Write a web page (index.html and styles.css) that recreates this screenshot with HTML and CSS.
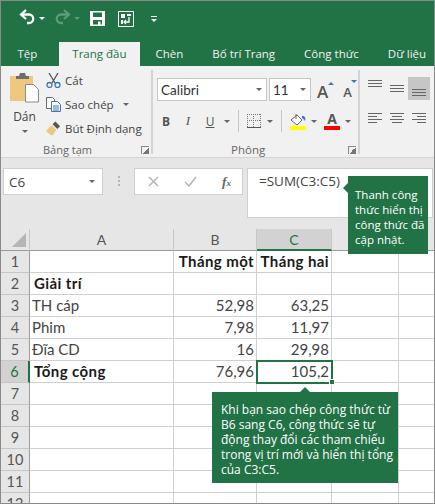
FILE: index.html
```html
<!DOCTYPE html>
<html lang="vi">
<head>
    <meta charset="UTF-8" />
    <title>Excel</title>
    <link rel="stylesheet" href="styles.css">
</head>
<body>
<div class="cua-so">
    <div class="thanh-nhanh">
        <svg class="qa qa-undo" width="16" height="16" viewBox="0 0 16 16"><path d="M7 1 2 5.500l5 4.500M2.500 5.500H10a4.200 4.200 0 0 1 0 8.500H8" fill="none" stroke="#fff" stroke-width="2.300"/></svg>
        <span class="caret caret-trang"></span>
        <svg class="qa qa-redo" width="16" height="16" viewBox="0 0 16 16"><path d="M9 1l5 4.500-5 4.500M13.500 5.500H6a4.200 4.200 0 0 0 0 8.500h2" fill="none" stroke="#5f9a7a" stroke-width="2.300"/></svg>
        <span class="caret caret-mo"></span>
        <svg class="qa qa-save" width="15" height="15" viewBox="0 0 15 15"><path d="M0 0h15v15H0z" fill="#fff"/><path d="M3 1.500h9v4.500H3zM3 9h9v4.500h-1.500V10.500H8v3H3z" fill="#217346"/></svg>
        <svg class="qa qa-touch" width="16" height="16" viewBox="0 0 16 16"><path d="M.5.5h15v15H.5z" fill="#217346" stroke="#fff"/><path d="M3 3h4v4H3zM9 3h4v2H9zM3 9h2v4H3z" fill="#fff"/><path d="M11 6v5H6m2-2-2 2 2 2" fill="none" stroke="#fff" stroke-width="1.300"/></svg>
        <span class="tuy-chinh"></span>
    </div>

    <div class="thanh-tab">
        <span class="tab">Tệp</span>
        <span class="tab tab-chon">Trang đầu</span>
        <span class="tab">Chèn</span>
        <span class="tab">Bố trí Trang</span>
        <span class="tab">Công thức</span>
        <span class="tab">Dữ liệu</span>
    </div>

    <div class="ribbon">
        <div class="nhom nhom-bang-tam">
            <div class="nhom-than">
                <div class="nut-dan">
                    <svg width="29" height="30" viewBox="0 0 29 30">
                        <path d="M0 3h23v25H0z" fill="#edc87e"/>
                        <path d="M6 3h3l1-3h5l1 3h3v3H6z" fill="#6d6d6d"/>
                        <path d="M15.500 11.500h8l5 5v12.500h-13z" fill="#fff" stroke="#8a8a8a"/>
                    </svg>
                    <span>Dán</span>
                    <span class="caret"></span>
                </div>
                <div class="lenh-nho">
                    <div class="lenh">
                        <svg width="15" height="15" viewBox="0 0 15 15"><path d="M3 0l6 10M12 0 6 10" stroke="#555" stroke-width="1.300" fill="none"/><circle cx="3.500" cy="12" r="2.500" fill="none" stroke="#3a78b5" stroke-width="1.300"/><circle cx="11.500" cy="12" r="2.500" fill="none" stroke="#3a78b5" stroke-width="1.300"/></svg>
                        <span>Cắt</span>
                    </div>
                    <div class="lenh">
                        <svg width="15" height="15" viewBox="0 0 15 15"><path d="M.5.500h6l2 2v9h-8z" fill="#fff" stroke="#666"/><path d="M5.500 4.500h6l3 3v7h-9z" fill="#fff" stroke="#3a78b5"/><path d="M7 9h6M7 11h6M7 13h6" stroke="#3a78b5"/></svg>
                        <span>Sao chép</span>
                        <span class="caret caret-sao"></span>
                    </div>
                    <div class="lenh">
                        <svg width="15" height="15" viewBox="0 0 16 15"><path d="M0 10l6-6 5 5-4 6-3-1z" fill="#edc87e"/><path d="M7 3l3-3 5 5-3 3z" fill="#555"/></svg>
                        <span>Bút Định dạng</span>
                    </div>
                </div>
            </div>
            <div class="nhom-ten nhom-ten-bang">Bảng tạm<span class="mo-rong"></span></div>
        </div>

        <div class="nhom nhom-phong">
            <div class="chon-phong">
                <div class="o-chon o-font">Calibri<span class="caret"></span></div>
                <div class="o-chon o-co">11<span class="caret"></span></div>
                <span class="a-lon">A<i class="tam-giac len"></i></span>
                <span class="a-nho">A<i class="tam-giac xuong"></i></span>
            </div>
            <div class="dinh-dang">
                <b class="ky-tu">B</b>
                <i class="ky-tu ky-i">I</i>
                <u class="ky-tu">U</u>
                <span class="caret caret-u"></span>
                <span class="vach"></span>
                <svg class="icon-vien" width="14" height="14" viewBox="0 0 14 14" shape-rendering="crispEdges"><path d="M0 .5h14M0 6.500h14M.5 0v14M6.500 0v14M13.500 0v14" fill="none" stroke="#777" stroke-dasharray="1 1"/><path d="M0 13.500h14" stroke="#555"/></svg>
                <span class="caret caret-vien"></span>
                <span class="vach"></span>
                <svg class="icon-to" width="16" height="17" viewBox="0 0 16 17"><path d="M1 7l6-5 5 5-5 5z" fill="#fff" stroke="#666"/><path d="M6 1v5" stroke="#666"/><path d="M12 3c3 0 4 2 3 5-1-2-2-2-3-3z" fill="#3a78b5"/><path d="M0 13h16v4H0z" fill="#ffff00"/></svg>
                <span class="caret caret-to"></span>
                <span class="mau-chu">A</span>
                <span class="caret caret-chu"></span>
            </div>
            <div class="nhom-ten nhom-ten-phong">Phông<span class="mo-rong"></span></div>
        </div>

        <div class="nhom-canh">
            <svg class="canh canh-tren" width="14" height="8" viewBox="0 0 14 8"><path d="M0 .5h14M0 3.500h14M0 6.500h14" stroke="#666"/></svg>
            <svg class="canh" width="14" height="8" viewBox="0 0 14 8"><path d="M0 .5h14M0 3.500h14M0 6.500h14" stroke="#666"/></svg>
            <div class="canh-chon"><svg width="14" height="8" viewBox="0 0 14 8"><path d="M0 .5h14M0 3.500h14M0 6.500h14" stroke="#666"/></svg></div>
            <svg class="canh" width="14" height="10" viewBox="0 0 14 10"><path d="M0 .5h14M0 3.500h9M0 6.500h14M0 9.500h9" stroke="#666"/></svg>
            <svg class="canh" width="14" height="10" viewBox="0 0 14 10"><path d="M0 .5h14M2 3.500h10M0 6.500h14M2 9.500h10" stroke="#666"/></svg>
            <svg class="canh" width="14" height="10" viewBox="0 0 14 10"><path d="M0 .5h14M5 3.500h9M0 6.500h14M5 9.500h9" stroke="#666"/></svg>
        </div>
    </div>

    <div class="thanh-cong-thuc">
        <div class="o-ten">C6<span class="caret"></span></div>
        <span class="cham-doc"></span>
        <div class="nut-cong-thuc">
            <svg width="11" height="11" viewBox="0 0 11 11"><path d="M1 1l9 9M10 1l-9 9" stroke="#b5b5b5" stroke-width="1.500"/></svg>
            <svg width="13" height="11" viewBox="0 0 13 11"><path d="M1 6l4 4 7-9" fill="none" stroke="#b5b5b5" stroke-width="1.500"/></svg>
            <span class="fx">f<small>x</small></span>
        </div>
        <div class="o-cong-thuc">=SUM(C3:C5)</div>
    </div>

    <div class="bang">
        <div class="dau-cot goc"><span class="tam-giac-goc"></span></div>
        <div class="dau-cot">A</div>
        <div class="dau-cot">B</div>
        <div class="dau-cot cot-chon">C</div>
        <div class="dau-cot"></div>
        <div class="dau-cot"></div>

        <div class="dau-hang">1</div><div class="o"></div><div class="o dam phai">Tháng một</div><div class="o dam phai">Tháng hai</div><div class="o"></div><div class="o"></div>
        <div class="dau-hang">2</div><div class="o dam thut">Giải trí</div><div class="o"></div><div class="o"></div><div class="o"></div><div class="o"></div>
        <div class="dau-hang">3</div><div class="o">TH cáp</div><div class="o phai">52,98</div><div class="o phai">63,25</div><div class="o"></div><div class="o"></div>
        <div class="dau-hang">4</div><div class="o">Phim</div><div class="o phai">7,98</div><div class="o phai">11,97</div><div class="o"></div><div class="o"></div>
        <div class="dau-hang">5</div><div class="o">Đĩa CD</div><div class="o phai">16</div><div class="o phai">29,98</div><div class="o"></div><div class="o"></div>
        <div class="dau-hang hang-chon">6</div><div class="o dam thut">Tổng cộng</div><div class="o phai">76,96</div><div class="o phai o-chon-hien">105,2<span class="tay-nam"></span></div><div class="o"></div><div class="o"></div>
        <div class="dau-hang">7</div><div class="o"></div><div class="o"></div><div class="o"></div><div class="o"></div><div class="o"></div>
        <div class="dau-hang">8</div><div class="o"></div><div class="o"></div><div class="o"></div><div class="o"></div><div class="o"></div>
        <div class="dau-hang">9</div><div class="o"></div><div class="o"></div><div class="o"></div><div class="o"></div><div class="o"></div>
        <div class="dau-hang">10</div><div class="o"></div><div class="o"></div><div class="o"></div><div class="o"></div><div class="o"></div>
        <div class="dau-hang">11</div><div class="o"></div><div class="o"></div><div class="o"></div><div class="o"></div><div class="o"></div>
        <div class="dau-hang dau-hang-cuoi">12</div><div class="o"></div><div class="o"></div><div class="o"></div><div class="o"></div><div class="o"></div>
    </div>

    <div class="chu-thich chu-thich-tren">Thanh công thức hiển thị công thức đã cập nhật.</div>
    <div class="chu-thich chu-thich-duoi">Khi bạn sao chép công thức từ B6 sang C6, công thức sẽ tự động thay đổi các tham chiếu trong vị trí mới và hiển thị tổng của C3:C5.</div>
</div>
</body>
</html>
```

FILE: styles.css
```css
* {
    margin: 0;
    padding: 0;
    box-sizing: border-box;
}

body {
    font-family: "Open Sans", "Noto Sans", sans-serif;
    background: #ffffff;
}

.cua-so {
    position: relative;
    width: 435px;
    height: 504px;
    overflow: hidden;
    border: 1px solid #8a8a8a;
    background: #e6e6e6;
}

.caret {
    display: inline-block;
    flex: none;
    width: 0;
    height: 0;
    border-left: 3px solid transparent;
    border-right: 3px solid transparent;
    border-top: 3px solid #666;
}

/* thanh truy cap nhanh */
.thanh-nhanh {
    height: 41px;
    background: #217346;
    display: flex;
    align-items: center;
    padding: 0 0 6px 18px;
}

.qa-undo,
.qa-redo {
    margin-top: -4px;
}

.caret-trang {
    border-top-color: #fff;
    margin-left: 4px;
}

.caret-mo {
    border-top-color: #5f9a7a;
    margin-left: 3px;
}

.qa-redo {
    margin-left: 10px;
}

.qa-save {
    margin-left: 10px;
}

.qa-touch {
    margin-left: 13px;
}

.tuy-chinh {
    width: 6px;
    height: 6px;
    margin-left: 17px;
    border-top: 1px solid #fff;
    position: relative;
}

.tuy-chinh::after {
    content: "";
    position: absolute;
    top: 2px;
    left: 0;
    border-left: 3px solid transparent;
    border-right: 3px solid transparent;
    border-top: 3px solid #fff;
}

/* tab */
.thanh-tab {
    height: 24px;
    background: #217346;
    display: flex;
    padding-left: 2px;
    font-size: 11.500px;
    color: #f1f1f1;
}

.tab {
    padding: 0 14.500px;
    line-height: 24px;
    white-space: nowrap;
}

.tab-chon {
    background: #f1f1f1;
    color: #217346;
    margin: 0 1px 0 7px;
    padding: 0 13.500px;
}

/* ribbon */
.ribbon {
    height: 92px;
    background: #f1f1f1;
    border-bottom: 1px solid #d4d4d4;
    display: flex;
    font-size: 11.500px;
    color: #444;
}

.nhom {
    position: relative;
    margin-top: 4px;
    height: 84px;
    border-right: 2px solid #d4d4d4;
}

.nhom-bang-tam {
    width: 152px;
}

.nhom-than {
    display: flex;
    padding: 3px 0 0 9px;
}

.nut-dan {
    display: flex;
    flex-direction: column;
    align-items: center;
    width: 29px;
    gap: 3px;
}

.nut-dan span:nth-child(2) {
    line-height: 20px;
    font-size: 12px;
    margin-top: 1px;
}

.lenh-nho {
    margin: -4px 0 0 7px;
    display: flex;
    flex-direction: column;
    gap: 1px;
}

.lenh {
    display: flex;
    align-items: center;
    gap: 4px;
    height: 23px;
    white-space: nowrap;
}

.caret-sao {
    margin-left: 5px;
}

.nhom-ten {
    position: absolute;
    top: 72px;
    line-height: 16px;
    color: #666;
    font-size: 11px;
}

.nhom-ten-bang {
    left: 42px;
}

.nhom-ten-phong {
    left: 78px;
    font-size: 11.500px;
}

.mo-rong {
    position: absolute;
    top: 4px;
    width: 8px;
    height: 8px;
    border-left: 1px solid #888;
    border-top: 1px solid #888;
    background: linear-gradient(135deg, transparent 50%, #777 50%);
}

.nhom-ten-bang .mo-rong {
    left: 98px;
}

.nhom-ten-phong .mo-rong {
    left: 117px;
}

.nhom-phong {
    width: 207px;
}

.chon-phong {
    display: flex;
    align-items: center;
    padding: 7px 0 0 4px;
    gap: 2px;
}

.o-chon {
    height: 23px;
    background: #fff;
    border: 1px solid #c6c6c6;
    display: flex;
    align-items: center;
    justify-content: space-between;
    padding: 0 4px 0 3px;
    font-family: "Lato", sans-serif;
    font-size: 13.500px;
    color: #333;
}

.o-font {
    width: 110px;
}

.o-co {
    width: 42px;
}

.a-lon,
.a-nho {
    position: relative;
    font-size: 17px;
    font-weight: 600;
    color: #555;
    line-height: 20px;
}

.a-lon {
    margin: 4px 0 0 4px;
}

.a-nho {
    font-size: 13px;
    margin: 5px 0 0 13px;
}

.tam-giac {
    position: absolute;
    top: 0;
    right: -6px;
    border-left: 3px solid transparent;
    border-right: 3px solid transparent;
}

.a-nho .tam-giac {
    top: -2px;
    right: -5px;
}

.len {
    border-bottom: 3px solid #3a78b5;
}

.xuong {
    border-top: 3px solid #3a78b5;
}

.dinh-dang {
    display: flex;
    align-items: center;
    height: 24px;
    margin-top: 7px;
    padding-left: 2px;
}

.ky-tu {
    font-size: 12px;
    width: 22px;
    text-align: center;
    color: #555;
}

.ky-i {
    font-family: "Liberation Serif", serif;
    font-size: 13px;
}

.caret-u {
    margin-left: 3px;
}

.caret-vien {
    margin-left: 6px;
}

.caret-to {
    margin-left: 5px;
}

.caret-chu {
    margin-left: 5px;
}

.vach {
    flex: none;
    width: 1px;
    height: 22px;
    background: #c6c6c6;
    margin: 0 8px;
}

.mau-chu {
    margin-left: 7px;
    width: 16px;
    text-align: center;
    font-size: 14px;
    font-weight: 700;
    line-height: 14px;
    color: #555;
    border-bottom: 4px solid #ff0000;
}

.nhom-canh {
    display: grid;
    grid-template-columns: repeat(3, 22px);
    grid-template-rows: 23px 22px;
    row-gap: 7px;
    margin: 11px 0 0 4px;
    justify-items: center;
    align-items: center;
    align-content: start;
}

.canh-tren {
    align-self: start;
    margin-top: 3px;
}

.canh-chon {
    width: 22px;
    height: 23px;
    background: #c6c6c6;
    display: flex;
    align-items: flex-end;
    justify-content: center;
    padding-bottom: 3px;
}

/* thanh cong thuc */
.thanh-cong-thuc {
    display: flex;
    height: 71px;
    padding-top: 10px;
    font-size: 13.500px;
    color: #444;
}

.o-ten {
    flex: none;
    width: 100px;
    height: 27px;
    margin-left: 2px;
    background: #fff;
    border: 1px solid #d0d0d0;
    display: flex;
    align-items: center;
    justify-content: space-between;
    padding: 0 7px 0 5px;
}

.cham-doc {
    flex: none;
    width: 2px;
    height: 10px;
    margin: 8px 14px 0 15px;
    background: repeating-linear-gradient(#b5b5b5 0 2px, transparent 2px 4px);
}

.nut-cong-thuc {
    flex: none;
    width: 109px;
    height: 27px;
    background: #fff;
    border: 1px solid #d0d0d0;
    display: flex;
    align-items: center;
    gap: 25px;
    padding-left: 13px;
}

.fx {
    font-family: "Liberation Serif", serif;
    font-style: italic;
    font-weight: 700;
    color: #666;
}

.fx small {
    font-size: 9px;
}

.o-cong-thuc {
    flex: none;
    width: 186px;
    height: 50px;
    margin-left: 4px;
    padding: 3px 0 0 11px;
    background: #fff;
    border: 1px solid #d0d0d0;
    white-space: nowrap;
}

/* bang tinh */
.bang {
    display: grid;
    grid-template-columns: 29px 144px 83px 75px 67px 36px;
    grid-template-rows: 22px repeat(12, 22px);
    font-family: "Lato", sans-serif;
    font-size: 15px;
    color: #444;
    background: #fff;
}

.dau-cot {
    background: #e6e6e6;
    border-right: 1px solid #c6c6c6;
    border-bottom: 1px solid #9b9b9b;
    text-align: center;
    line-height: 22px;
    font-size: 14px;
    color: #555;
}

.goc {
    position: relative;
}

.tam-giac-goc {
    position: absolute;
    right: 3px;
    bottom: 3px;
    border-left: 14px solid transparent;
    border-bottom: 14px solid #b5b5b5;
}

.cot-chon {
    background: #d2d2d2;
    color: #217346;
    border-bottom: 2px solid #217346;
}

.dau-hang {
    background: #e6e6e6;
    border-right: 1px solid #9b9b9b;
    border-bottom: 1px solid #c6c6c6;
    text-align: center;
    line-height: 21px;
    font-size: 14.500px;
    color: #555;
}

.hang-chon {
    background: #d2d2d2;
    color: #217346;
    border-right: 2px solid #217346;
}

.o {
    border-right: 1px solid #d0d0d0;
    border-bottom: 1px solid #d0d0d0;
    line-height: 21px;
    padding: 0 2px;
    white-space: nowrap;
}

.dam {
    font-weight: 700;
    color: #1a1a1a;
    letter-spacing: 0.4px;
}

.thut {
    padding-left: 4px;
}

.phai {
    text-align: right;
}

.o-chon-hien {
    position: relative;
    outline: 2px solid #217346;
    outline-offset: -1px;
}

.tay-nam {
    position: absolute;
    right: -4px;
    bottom: -3px;
    width: 6px;
    height: 6px;
    background: #217346;
    border: 1px solid #fff;
}

/* chu thich */
.chu-thich {
    position: absolute;
    background: #217346;
    color: #fff;
    font-size: 12px;
    line-height: 15px;
}

.chu-thich::before {
    content: "";
    position: absolute;
}

.chu-thich-tren {
    left: 347px;
    top: 175px;
    width: 80px;
    height: 78px;
    padding: 11px 0 0 7px;
    font-size: 11.500px;
}

.chu-thich-tren::before {
    left: -5px;
    top: 7px;
    border-top: 5px solid transparent;
    border-bottom: 5px solid transparent;
    border-right: 5px solid #217346;
}

.chu-thich-duoi {
    left: 211px;
    top: 391px;
    width: 186px;
    height: 91px;
    padding: 10px 0 0 9px;
}

.chu-thich-duoi::before {
    left: 88px;
    top: -5px;
    border-left: 5px solid transparent;
    border-right: 5px solid transparent;
    border-bottom: 5px solid #217346;
}
```
